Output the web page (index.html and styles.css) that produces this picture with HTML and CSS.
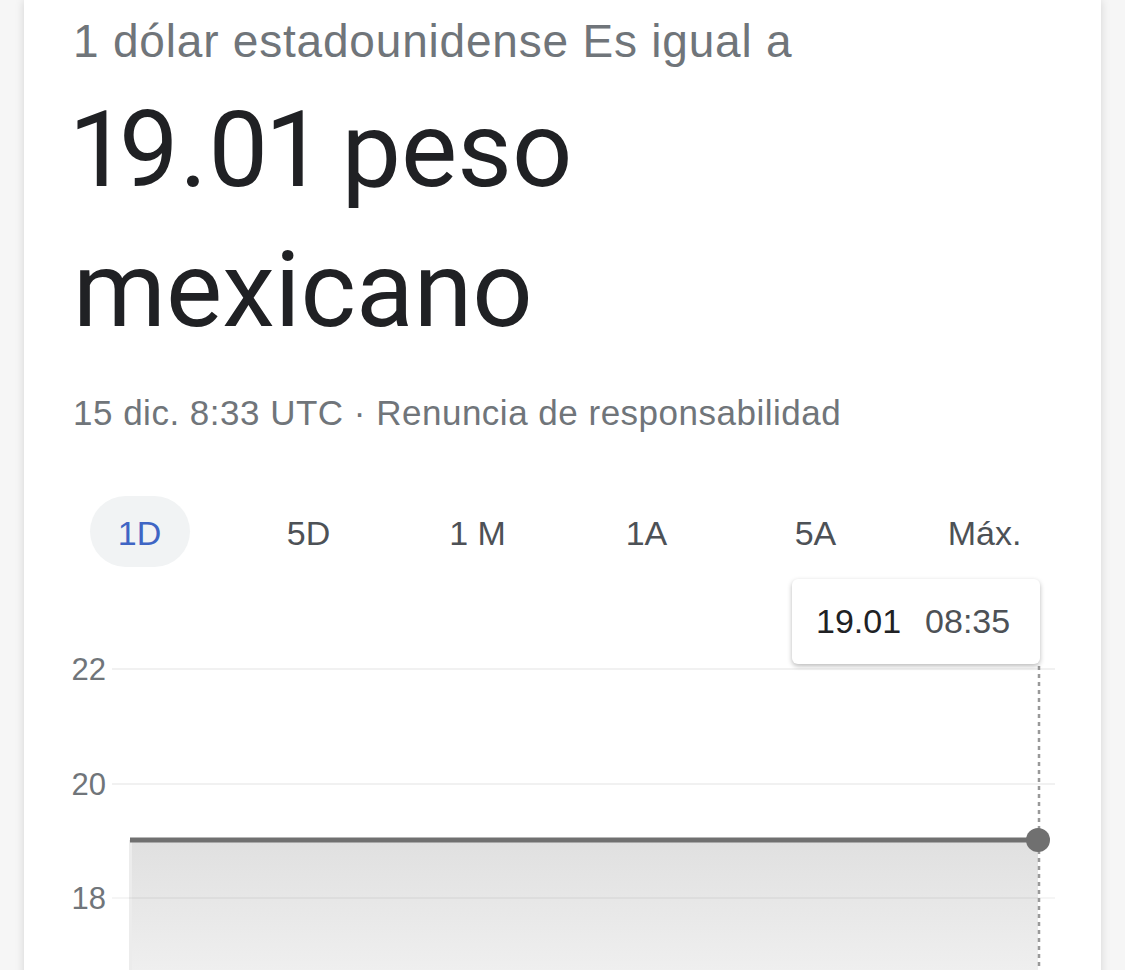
FILE: index.html
```html
<!DOCTYPE html>
<html lang="es">
<head>
<meta charset="utf-8">
<title>Conversor de divisas</title>
<link rel="stylesheet" href="styles.css">
</head>
<body>
<div class="card">
  <div class="header">
    <div class="subtitle">1 dólar estadounidense Es igual a</div>
    <div class="result">19.01 peso mexicano</div>
    <div class="meta">15 dic. 8:33 UTC · Renuncia de responsabilidad</div>
  </div>
  <div class="tabs">
    <div class="tab"><span class="pill active">1D</span></div>
    <div class="tab"><span class="pill">5D</span></div>
    <div class="tab"><span class="pill">1 M</span></div>
    <div class="tab"><span class="pill">1A</span></div>
    <div class="tab"><span class="pill">5A</span></div>
    <div class="tab"><span class="pill">Máx.</span></div>
  </div>
  <div class="chart">
    <svg class="plot" width="1077" height="400" viewBox="0 0 1077 400">
      <defs>
        <linearGradient id="fill" x1="0" y1="0" x2="0" y2="1">
          <stop offset="0" stop-color="#e0e0e0"/>
          <stop offset="1" stop-color="#f0f0f0"/>
        </linearGradient>
      </defs>
      <rect x="106" y="263" width="908" height="140" fill="url(#fill)"/>
      <line x1="106.5" y1="263" x2="106.5" y2="400" stroke="#ececec" stroke-width="3"/>
      <line x1="88" y1="92" x2="1031" y2="92" stroke="#f1f1f1" stroke-width="2"/>
      <line x1="88" y1="207" x2="1031" y2="207" stroke="#f1f1f1" stroke-width="2"/>
      <line x1="88" y1="321" x2="1031" y2="321" stroke="rgba(0,0,0,0.04)" stroke-width="2"/>
      <text class="axis" x="82" y="103" text-anchor="end">22</text>
      <text class="axis" x="82" y="218" text-anchor="end">20</text>
      <text class="axis" x="82" y="332" text-anchor="end">18</text>
      <line x1="1015" y1="89" x2="1015" y2="400" stroke="#999999" stroke-width="2.5" stroke-dasharray="4 4"/>
      <line x1="106" y1="263" x2="1014" y2="263" stroke="#707070" stroke-width="5"/>
      <circle cx="1014" cy="263" r="12" fill="#707070"/>
    </svg>
    <div class="tooltip"><span class="tip-val">19.01</span><span class="tip-time">08:35</span></div>
  </div>
</div>
</body>
</html>
```

FILE: styles.css
```css
html, body {
  margin: 0;
  padding: 0;
  height: 970px;
  overflow: hidden;
}
body {
  background: #f6f6f6;
  font-family: "Liberation Sans", Arial, sans-serif;
}
.card {
  margin-left: 24px;
  width: 1077px;
  height: 1000px;
  background: #fff;
  box-shadow: 0 0 9px rgba(0, 0, 0, 0.14);
}
.header {
  padding: 16px 0 0 49px;
}
.subtitle {
  font-size: 46px;
  letter-spacing: 0.8px;
  line-height: 50px;
  color: #70757a;
}
.result {
  margin-top: 14px;
  max-width: 600px;
  font-family: Roboto, "Liberation Sans", sans-serif;
  font-size: 106px;
  line-height: 140px;
  font-variant-numeric: proportional-nums;
  color: #202124;
}
.meta {
  margin-top: 33px;
  font-size: 35px;
  letter-spacing: 0.5px;
  line-height: 40px;
  color: #70757a;
}
.tabs {
  display: grid;
  grid-template-columns: repeat(6, 169px);
  margin-top: 63px;
  padding-left: 31px;
  height: 71px;
}
.tab {
  display: flex;
  align-items: center;
  justify-content: center;
}
.pill {
  display: flex;
  align-items: center;
  justify-content: center;
  width: 100px;
  height: 71px;
  border-radius: 36px;
  font-size: 34px;
  color: #4d5156;
  padding-top: 4px;
  box-sizing: border-box;
}
.pill.active {
  background: #f1f3f4;
  color: #3f65c4;
}
.chart {
  position: relative;
  margin-top: 10px;
  height: 400px;
}
.plot {
  display: block;
}
.axis {
  font-family: "Liberation Sans", Arial, sans-serif;
  font-size: 31px;
  fill: #70757a;
}
.tooltip {
  position: absolute;
  left: 768px;
  top: 2px;
  width: 248px;
  height: 85px;
  box-sizing: border-box;
  background: #fff;
  border-radius: 6px;
  box-shadow: 0 2px 5px rgba(0, 0, 0, 0.28);
  display: flex;
  align-items: center;
  padding-left: 24px;
  gap: 24px;
  font-size: 34px;
}
.tip-val {
  color: #202124;
}
.tip-time {
  color: #4d5156;
}
```
